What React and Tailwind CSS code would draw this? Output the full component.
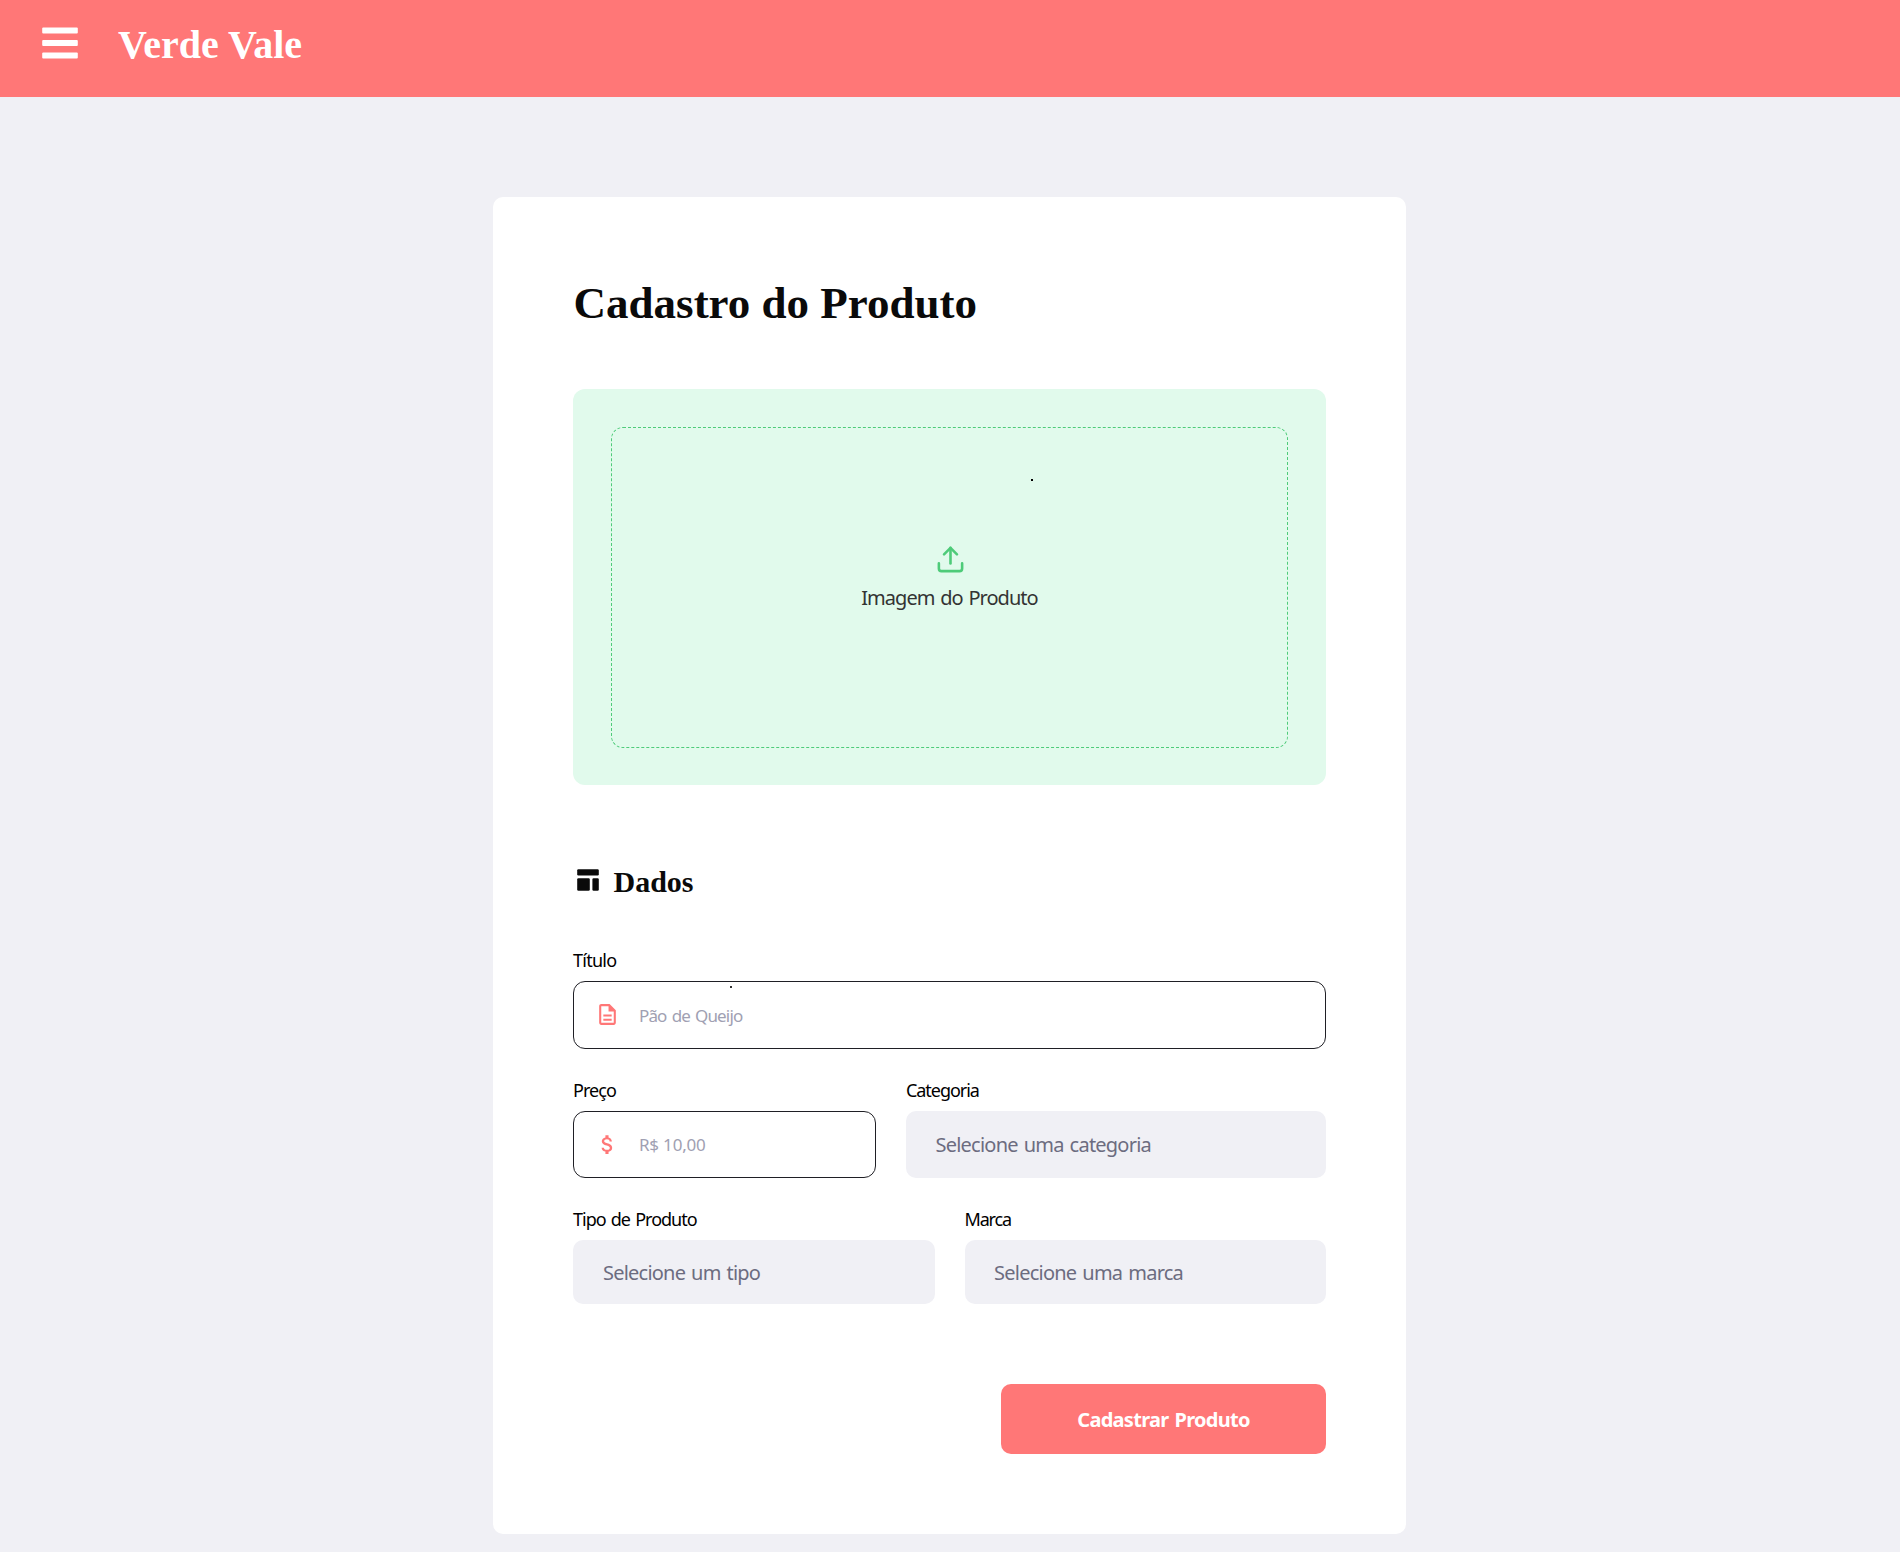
import React from "react";
import { FiUpload } from "react-icons/fi";
import { MdAttachMoney, MdOutlineDescription } from "react-icons/md";

function MenuIcon() {
  return (
    <svg width="36" height="32" viewBox="0 0 36 32" fill="currentColor">
      <rect x="0.2" y="0.4" width="35.6" height="6" rx="1" />
      <rect x="0.2" y="12.9" width="35.6" height="6" rx="1" />
      <rect x="0.2" y="25.4" width="35.6" height="6" rx="1" />
    </svg>
  );
}

function LayoutIcon() {
  return (
    <svg width="30" height="30" viewBox="0 0 30 30" fill="currentColor">
      <rect x="4.2" y="4.2" width="21.6" height="6.2" rx="1.2" />
      <rect x="4.2" y="13.3" width="12.6" height="12.4" rx="1.2" />
      <rect x="19.4" y="13.3" width="6.4" height="12.4" rx="1.2" />
    </svg>
  );
}

function Label({ children, className }) {
  return <label className={`block text-[18px] leading-6 text-black [word-spacing:1.5px] ${className}`}>{children}</label>;
}

function Input({ icon, placeholder, className }) {
  return (
    <div className="mt-[9px] flex items-center gap-[19px] rounded-[12px] border border-[#1f1f25] bg-white pl-[21px] text-[#ff7777]">
      {icon}
      <span className={`flex items-center text-[17px] text-[#a0a0b2] ${className}`}>{placeholder}</span>
    </div>
  );
}

function Select({ children, className }) {
  return (
    <div className={`mt-[9px] flex items-center rounded-[10px] bg-[#f0f0f5] text-[20px] text-[#6c6c80] [word-spacing:1.5px] ${className}`}>
      {children}
    </div>
  );
}

export default function App() {
  return (
    <div className="min-h-[1552px] bg-[#f0f0f5] font-['Noto_Sans',sans-serif]">
      <header className="flex h-[97px] items-center bg-[#ff7777] pb-2 pl-[42px] text-white">
        <div className="-mt-[3px]">
          <MenuIcon />
        </div>
        <span className="ml-[40px] pt-px font-['Liberation_Serif',serif] text-[40px] leading-[48px] font-bold">Verde Vale</span>
      </header>

      <main className="mt-[100px] ml-[493px] w-[913px] rounded-[10px] bg-white p-20">
        <h1 className="pl-[0.6px] font-['Liberation_Serif',serif] text-[45px] leading-[52px] font-bold text-[#0a0a0a]">
          Cadastro do Produto
        </h1>

        <div className="mt-[60px] h-[396px] rounded-[12px] bg-[#e1faec] pt-[38px]">
          <div className="relative mx-auto flex h-[321px] w-[677px] flex-col items-center rounded-[12px] border border-dashed border-[#4ecb79] pt-[116px]">
            <FiUpload className="ml-px shrink-0 text-[#4ecb79]" size={31} />
            <span className="mt-[9px] text-[20px] leading-7 tracking-[-0.96px] text-[#333333] [word-spacing:1.5px]">Imagem do Produto</span>
            <i className="absolute top-[51px] left-[419px] size-[2px] bg-black" />
          </div>
        </div>

        <h2 className="mt-[79px] flex h-9 items-center gap-[10.5px] font-['Liberation_Serif',serif] text-[30px] leading-9 font-bold text-[#0a0a0a]">
          <span className="-mt-[5px]">
            <LayoutIcon />
          </span>
          Dados
        </h2>

        <div className="mt-12">
          <Label className="tracking-[-0.75px]">Título</Label>
          <div className="relative">
            <Input icon={<MdOutlineDescription className="-mt-px" size={25} />} placeholder="Pão de Queijo" className="h-[66px] pt-[2px] tracking-[-0.85px] [word-spacing:1.5px]" />
            <i className="absolute top-[5px] left-[157px] size-[2px] bg-[#333333]" />
          </div>
        </div>

        <div className="mt-[29px] flex gap-[30px]">
          <div className="w-[303px]">
            <Label className="tracking-[-0.95px]">Preço</Label>
            <Input icon={<MdAttachMoney size={25} />} placeholder="R$ 10,00" className="h-[65px] tracking-[-0.2px]" />
          </div>
          <div className="flex-1">
            <Label className="tracking-[-1.05px]">Categoria</Label>
            <Select className="h-[67px] pl-[29.5px] tracking-[-0.77px]">Selecione uma categoria</Select>
          </div>
        </div>

        <div className="mt-[29px] grid grid-cols-2 gap-[30px]">
          <div>
            <Label className="tracking-[-1px]">Tipo de Produto</Label>
            <Select className="h-[64px] pt-[2px] pl-[30px] tracking-[-0.78px]">Selecione um tipo</Select>
          </div>
          <div>
            <Label className="tracking-[-1.15px]">Marca</Label>
            <Select className="h-[64px] pt-[2px] pl-[29.5px] tracking-[-0.76px]">Selecione uma marca</Select>
          </div>
        </div>

        <button className="mt-20 ml-auto flex h-[70px] w-[325px] items-center justify-center rounded-[10px] bg-[#ff7777] pt-[2px] text-[20px] font-bold tracking-[-0.72px] text-white [word-spacing:1.5px]">
          Cadastrar Produto
        </button>
      </main>
    </div>
  );
}
